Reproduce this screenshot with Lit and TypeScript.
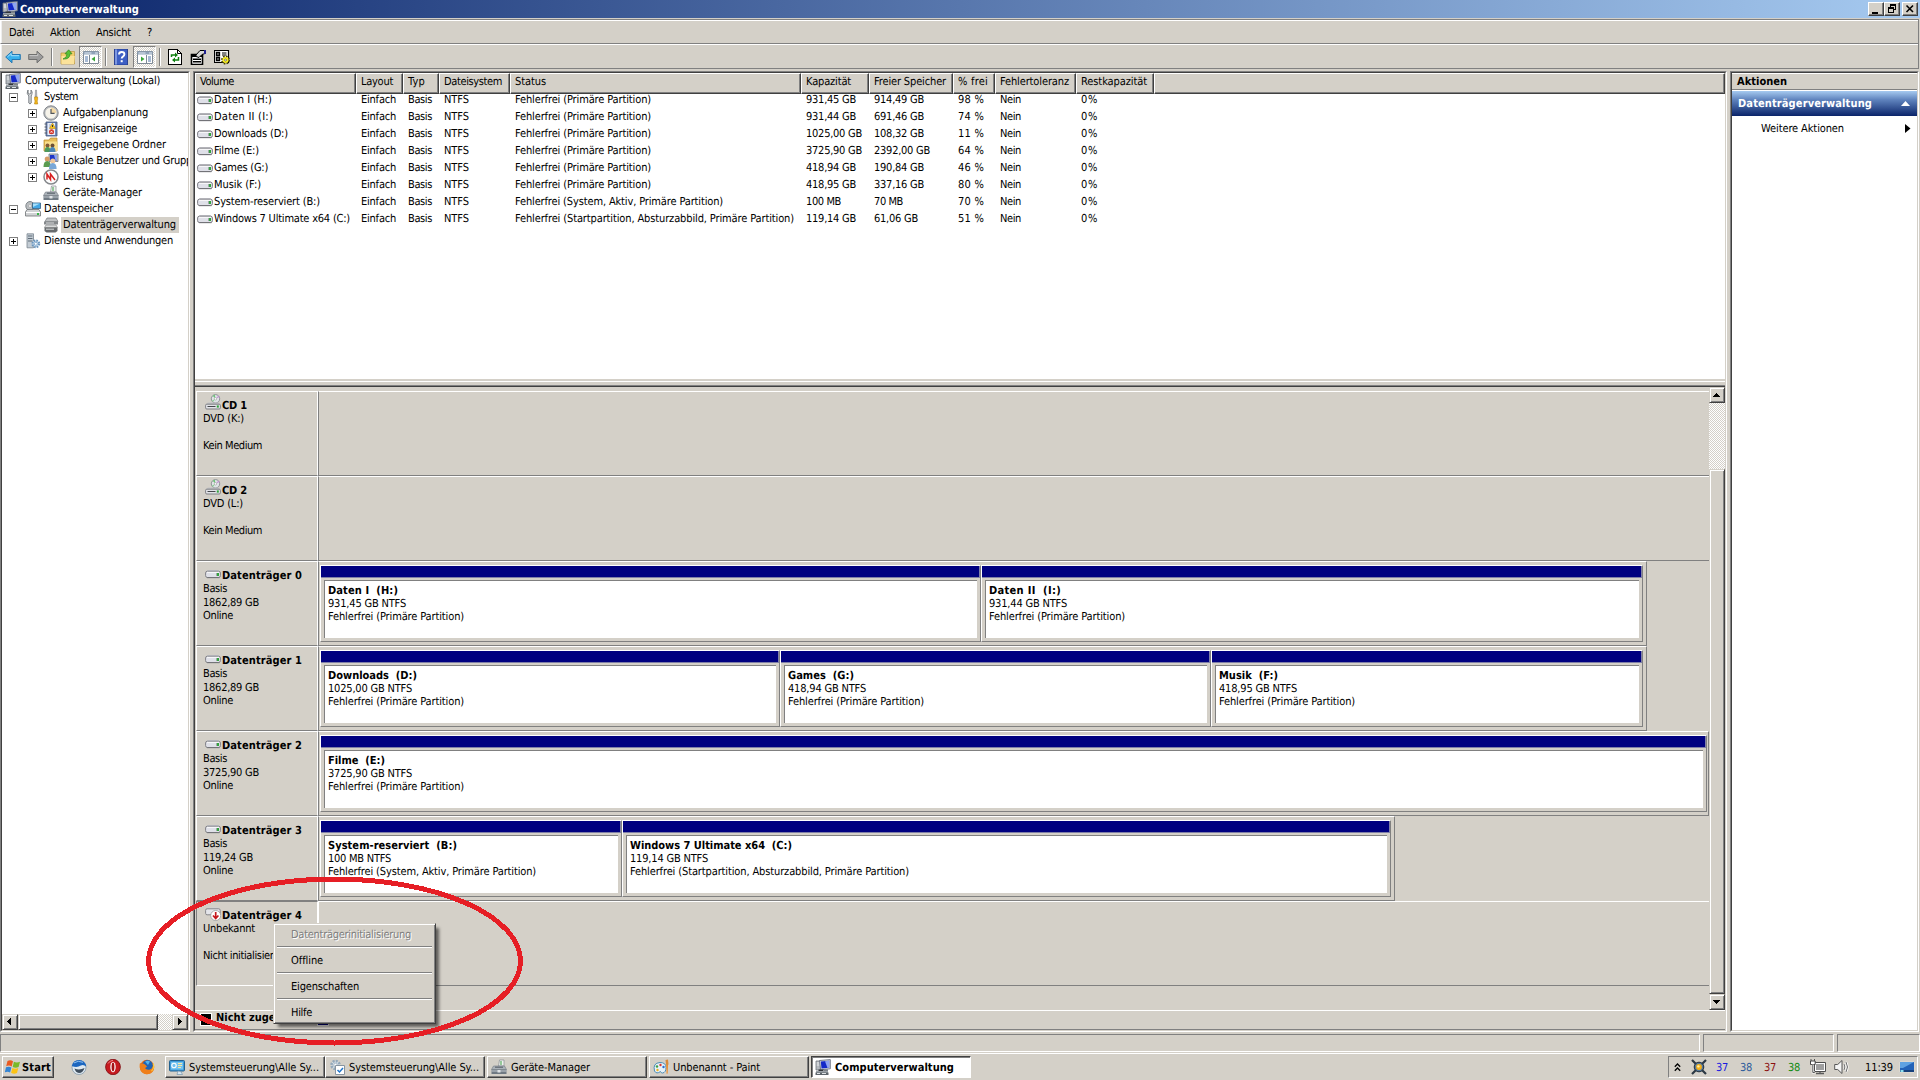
import { LitElement, html, css, svg, nothing } from "lit";
import { customElement, property } from "lit/decorators.js";

/* ---------- label metrics: classic 11px UI advances ---------- */
const REG: Record<string, string> = {
  "2": "il", "3": " j'", "4": ",.frt()-:\\I", "5": "csyzkJ?", "6": "vxabdeghnopquBCEFKPSTVXZ0123456789äöü",
  "7": "ADGHNRUY", "8": "OwmMQ", "11": "%", "10": "W",
};
const BOLD: Record<string, string> = {
  "3": "il ,.", "4": ":j-", "5": "trfsI()", "6": "cyz", "7": "vaäbdeghknopquxACFLSEBPT0123456789",
  "8": "DGNHVU", "9": "wMO", "10": "m", "11": "W",
};
const table = (src: Record<string, string>) => {
  const out: Record<string, number> = {};
  for (const k of Object.keys(src)) for (const c of src[k]) out[c] = Number(k);
  return out;
};
const REG_W = { ...table(REG), L: 5 };
const BOLD_W = { ...table(BOLD), s: 6 };
const FAMILY = '"DejaVu Sans Condensed", "DejaVu Sans", sans-serif';
const ctx = document.createElement("canvas").getContext("2d")!;

@customElement("ui-text")
class UiText extends LitElement {
  @property() t = "";
  @property({ type: Boolean, reflect: true }) bold = false;
  static styles = css`
    :host { display: inline-flex; white-space: pre; flex: none; height: 13px; font: 11px/13px "DejaVu Sans Condensed", "DejaVu Sans", sans-serif; vertical-align: top; }
    .t { display: block; text-rendering: geometricPrecision; }
    :host([bold]) .t { font-weight: bold; }
  `;
  render() {
    const w: Record<string, number> = this.bold ? BOLD_W : REG_W;
    let target = 0;
    for (const c of this.t) target += w[c] ?? 6;
    ctx.font = `${this.bold ? "bold " : ""}11px ${FAMILY}`;
    const gap = (target - ctx.measureText(this.t).width) / this.t.length;
    return html`<span class="t" style="letter-spacing:${gap.toFixed(3)}px">${this.t}</span>`;
  }
}
const T = (t: string, bold = false) => html`<ui-text .t=${t} ?bold=${bold}></ui-text>`;

/* ---------- icons, 16x16 ---------- */
const I: Record<string, unknown> = {
  computer: svg`<path d="M1 2h4.500v9H1z" fill="#b4b9bf" stroke="#6f757c" stroke-width=".8"/><path d="M1.800 4h3M1.800 6h3" stroke="#eef0f2"/><path d="M4.500 1.500L15.300.6v9.200L5.500 10.800z" fill="#d3d7dd" stroke="#6b7280" stroke-width=".9"/><path d="M5.800 2.500L14.200 1.800V8.700L6.500 9.500z" fill="#1428c8"/><path d="M10 2.200L14.200 1.800V8.700L12.500 8.900z" fill="#8fa4f0"/><path d="M9 10.300h4v1.700H9z" fill="#7d838a"/><path d="M3.500 10.500h5v1.500h-5z" fill="#30353a"/><path d="M1 12h12v2H1z" fill="#9aa1a8"/><path d="M.5 13.500h13V16H.5z" fill="#5d646b"/><path d="M2 14.500h3M7 14.500h4" stroke="#dfe3e6"/>`,
  tools: svg`<path d="M3 1v3l1.600 1L6 4V1q2 2 .8 4.500L6.200 7v7q-1.200 2-2.400 0V7Q1 4.500 3 1z" fill="#d5d8db" stroke="#73787d" stroke-width=".9"/><path d="M10.500 1h1l.4 7h-1.800z" fill="#b4b6b9" stroke="#7c7f83" stroke-width=".5"/><path d="M9.600 8h3v2.500l-.5 1.500.6 3h-3.200l.6-3-.5-1.500z" fill="#f3b81c" stroke="#b5800e" stroke-width=".6"/>`,
  clock: svg`<circle cx="8" cy="8" r="7.200" fill="#b7babd" stroke="#7c7f83" stroke-width=".9"/><circle cx="8" cy="8" r="5.600" fill="#f6f3ea"/><path d="M8 8V2.600A5.400 5.400 0 0 1 13.400 8z" fill="#f4d9a4"/><path d="M8 4v4.400h3.600" fill="none" stroke="#51565c" stroke-width="1.200"/>`,
  event: svg`<path d="M3 1h11v14H3z" fill="#7088b8" stroke="#42557c" stroke-width=".8"/><path d="M4.500 2h7.500v12H4.500z" fill="#e9eef8"/><path d="M6 4h5M6 6h5M6 12h5" stroke="#9aa9c6"/><path d="M1.500 3h2.500M1.500 6h2.500M1.500 9h2.500M1.500 12h2.500" stroke="#555d6a"/><path d="M9.500 2l3 5.500h-6z" fill="#fbc61d" stroke="#ad7c00" stroke-width=".5"/><path d="M9.500 4v2" stroke="#333"/><circle cx="8.500" cy="10.800" r="2.500" fill="#d33023"/><path d="M7.500 9.800l2 2m0-2l-2 2" stroke="#fff" stroke-width=".8"/>`,
  share: svg`<path d="M1 3h5l1.500-2H14v13H1z" fill="#e8bd58" stroke="#b78a2c" stroke-width=".7"/><path d="M2 4.500h12.500v9.500H2z" fill="#f9df8d"/><circle cx="4.500" cy="8.500" r="2" fill="#845b38"/><path d="M1.500 15q0-5 3-5t3 5z" fill="#4d9a5b"/><circle cx="9.500" cy="8.500" r="2" fill="#6d4f35"/><path d="M6.500 15q0-5 3-5t3 5z" fill="#4b85b8"/>`,
  users: svg`<path d="M6 1h9v7.500H6z" fill="#c5cad3" stroke="#6b7482" stroke-width=".8"/><path d="M7 2h7v5.500H7z" fill="#1d36c8"/><path d="M11 2h3v5.500h-1.500z" fill="#8fa4f0"/><circle cx="4.200" cy="6" r="2.500" fill="#d69c66"/><path d="M.5 14q0-6 3.700-6t3.700 6z" fill="#5a9b50"/><circle cx="9.800" cy="8" r="2.500" fill="#efc79b"/><path d="M6 16q0-6 3.800-6t3.800 6z" fill="#79a7d8"/>`,
  perf: svg`<circle cx="8" cy="8" r="7" fill="#fdfdfd" stroke="#85888c" stroke-width="1.500"/><path d="M4 10.500V5l3.500 5.500V5l4.500 6" fill="none" stroke="#d81f1f" stroke-width="1.500"/>`,
  device: svg`<path d="M8.500 1h4.500v6H7.500z" fill="#eef2ee" stroke="#8a8e92" stroke-width=".7"/><path d="M10 2v4" stroke="#3c9d46"/><path d="M2.500 7h11l2 3.500h-15z" fill="#aab1b8" stroke="#747b83" stroke-width=".6"/><path d="M4 8.200h8" stroke="#555c64"/><path d="M.5 10.500h15V15H.5z" fill="#6f7983"/><path d="M.5 12h15" stroke="#cdd3d8" stroke-width=".9"/><path d="M6.500 11h3v2.500h-3z" fill="#e1e4e7"/>`,
  storage: svg`<ellipse cx="5" cy="5" rx="4.200" ry="4.500" fill="#b9bdc0" stroke="#6c7378" stroke-width=".8"/><circle cx="5" cy="5" r="1.400" fill="#fff" stroke="#888" stroke-width=".5"/><path d="M7.500 2h8v5.500h-8z" fill="#44a8e6" stroke="#345e80" stroke-width=".8"/><path d="M8 2.500h7L8 6z" fill="#a7e0fb"/><path d="M2 8.500h12l1.500 2.500v4H.5v-4z" fill="#d0d2d4" stroke="#6e7275" stroke-width=".8"/><path d="M1 11.500h14" stroke="#fff"/><path d="M12 12h2v2h-2z" fill="#39b54a"/>`,
  diskmgmt: svg`<path d="M4 1h9l2 3.500H2z" fill="#bfc2c4" stroke="#777a7c" stroke-width=".7"/><path d="M1 4.500h14v3H1z" fill="#85898c"/><path d="M3 8h10l1.500 2.500h-13z" fill="#d9dbdc" stroke="#77797a" stroke-width=".6"/><path d="M1.500 10.500h13V14l-2 1.500h-9L1.500 14z" fill="#686c6f"/><path d="M3 12.200h8M3 6h8" stroke="#e1e3e4" stroke-width=".9"/>`,
  services: svg`<path d="M2 .8h6.500v14H2z" fill="#c3ccd4" stroke="#7a858f" stroke-width=".8"/><path d="M3 3h4.500M3 5.500h4.500M3 8h4.500" stroke="#5f6c78"/><circle cx="10.800" cy="10.800" r="3.300" fill="#cfe2f3" stroke="#6c96bd" stroke-width="2.200" stroke-dasharray="1.600 1"/><circle cx="10.800" cy="10.800" r="1.500" fill="#fff" stroke="#6c96bd" stroke-width=".7"/>`,
  drive: svg`<path d="M3 4h10l2.200 1.600H.8z" fill="#c8c9ce"/><rect x=".6" y="5.200" width="14.800" height="6.300" rx="1.800" fill="#dfe0e8" stroke="#818187" stroke-width="1"/><path d="M2 6.400h12" stroke="#fff" stroke-width=".8"/><path d="M2 11.700h12.500" stroke="#6b6b70" stroke-width=".8"/><path d="M12 7h2v3h-2z" fill="#2fa43a"/><path d="M11.400 7h.7v3h-.7z" fill="#76877a"/>`,
  cd: svg`<circle cx="10.500" cy="4.800" r="4.200" fill="#e0e4e7" stroke="#85898d" stroke-width=".9"/><path d="M10.500 4.800L7.600 1.800l2.200-1z" fill="#6cc277"/><path d="M10.500 4.800l3-3.200 1 1.500z" fill="#c08fd0"/><path d="M10.500 4.800L8 8l-1-1.500z" fill="#8fcf98"/><circle cx="10.500" cy="4.800" r="1.200" fill="#fff" stroke="#888" stroke-width=".5"/><path d="M3 8.500h10l2.500 2H.8z" fill="#bfc1c6"/><rect x=".6" y="10.200" width="14.800" height="4.800" rx="1.200" fill="#e2e3e8" stroke="#7e7e83"/><path d="M2.500 12.500h8" stroke="#45474a"/><path d="M11.800 11.400h2v2.200h-2z" fill="#2fa43a"/>`,
  baddrive: svg`<path d="M3 1.500h10L15 3H1z" fill="#cfd0d5"/><rect x=".6" y="2.800" width="14.600" height="6" rx="1.500" fill="#e4e5ea" stroke="#86868b"/><circle cx="10.700" cy="9.500" r="5" fill="#fff" stroke="#9a9a9e" stroke-width=".8"/><path d="M10.700 6v6M8 9.500l2.700 3 2.700-3" fill="none" stroke="#c4161c" stroke-width="1.700"/>`,
  back: svg`<path d="M.7 8L7 2.200v3.300h8.300v5H7v3.300z" fill="#39b1ec" stroke="#1b6fae" stroke-width=".9"/><path d="M2.500 7.800L6.200 4.500v2.200H14" fill="none" stroke="#a5e0fb"/>`,
  fwd: svg`<path d="M15.300 8L9 2.200v3.300H.7v5H9v3.300z" fill="#9c9c9c" stroke="#686868" stroke-width=".9"/><path d="M1.500 6.600h8.300V4.500" fill="none" stroke="#c8c8c8"/>`,
  folderup: svg`<path d="M1 4h5l1-1.500h7.500V15H1z" fill="#f2cf6d" stroke="#b9933b" stroke-width=".7"/><path d="M1.500 7h13.300L14 15H1.500z" fill="#fbe29a"/><path d="M3 10q4-1 4-5.200H5L8.700.8l3.300 4h-2Q10 10.500 3 10z" fill="#58c137" stroke="#2d8620" stroke-width=".7"/>`,
  paneL: svg`<path d="M.5 2.500h15v12H.5z" fill="#fff" stroke="#7f8a96"/><path d="M.5 2.500h15v3H.5z" fill="#8fa2b8"/><path d="M12 4h3M1.500 4h7" stroke="#e8eef5" stroke-width=".9"/><path d="M6.500 6v8.500" stroke="#7f8a96"/><path d="M2 8h3M2 10h3M2 12h3" stroke="#4f75a8"/><path d="M12 7.500v5L8.500 10z" fill="#3aa63a"/>`,
  paneR: svg`<path d="M.5 2.500h15v12H.5z" fill="#fff" stroke="#7f8a96"/><path d="M.5 2.500h15v3H.5z" fill="#8fa2b8"/><path d="M12 4h3M1.500 4h7" stroke="#e8eef5" stroke-width=".9"/><path d="M9.500 6v8.500" stroke="#7f8a96"/><path d="M11 8h3M11 10h3M11 12h3" stroke="#4f75a8"/><path d="M4 7.500v5L7.500 10z" fill="#3aa63a"/>`,
  help: svg`<path d="M1.500 0h13v16h-13z" fill="#3d5fc4" stroke="#223a8c" stroke-width=".9"/><path d="M2 .5h2v15H2z" fill="#7d97e0"/><path d="M6 5.500q0-2.500 2.700-2.500t2.700 2.300q0 1.500-1.500 2.300-1.200.7-1.200 2" fill="none" stroke="#fff" stroke-width="1.900"/><path d="M7.700 11.200h2v2h-2z" fill="#fff"/>`,
  refresh: svg`<path d="M1.500.5h9l4 4v11h-13z" fill="#fff" stroke="#000" shape-rendering="crispEdges"/><path d="M10.500.5v4h4" fill="none" stroke="#000"/><path d="M4.500 8V6h4M11.500 8v3h-4" fill="none" stroke="#108010" stroke-width="1.500"/><path d="M8 3.500v5L11 6zM8 8.500v5L5 11z" fill="#108010"/>`,
  props: svg`<path d="M1.500 5.500h11v10h-11z" fill="#fff" stroke="#000" stroke-width="1.600"/><path d="M1 5h12v3H1z"/><path d="M3 10.200h8M3 12.700h8" stroke="#000" stroke-width="1.500"/><path d="M6 6l4-4.500h5v3l-3 1-3 3-3-1z" fill="#d8d8d8" stroke="#000"/><path d="M14 1h2v4h-2z" fill="#202090"/>`,
  snap: svg`<path d="M.5 1.500h14v12H.5z" fill="#fff" stroke="#000" stroke-width="1.200"/><path d="M2.500 3.500h3v3h-3zM2.500 8.500h3v3h-3z" fill="#888" stroke="#000" stroke-width="1.300"/><path d="M8 4h4.500M8 6h4.500" stroke="#000"/><circle cx="11.500" cy="11" r="3.200" fill="none" stroke="#4b4500" stroke-width="2.600" stroke-dasharray="1.500 1"/><circle cx="11.500" cy="11" r="3" fill="#f8ee20"/><circle cx="11.500" cy="11" r="1" fill="#fff" stroke="#555" stroke-width=".7"/>`,
  flag: svg`<path d="M2.500 2q3-1.500 5.500.3L6.700 7.500q-2.500-1.600-5.500-.3z" fill="#ea5a20"/><path d="M8.900 2.700q2.800 1.500 6.100 0L13.600 8q-3 1.300-5.900-.1z" fill="#7ab929"/><path d="M1 8.300q3-1.400 5.400.2L5.100 13.600q-2.500-1.500-5.300-.2z" fill="#3384d3"/><path d="M7.400 9q2.900 1.500 5.900.1L12 14q-3 1.500-5.900-.2z" fill="#fcc315"/>`,
  bird: svg`<circle cx="8" cy="8.500" r="7" fill="#dfe9f1" stroke="#8398aa" stroke-width=".8"/><path d="M.8 7Q2 1 8 1q6.200 0 7.300 6.500-3-2.500-5.500-1Q6 9 .8 7z" fill="#1c66bf"/><path d="M3.500 9.500q5 2 10-.5-1.500 5-5.500 5-3.500-.5-4.500-4.500z" fill="#3f4e5e"/><path d="M3 3.900Q7 1 12 3.300" stroke="#8cc0f2" fill="none"/>`,
  opera: svg`<ellipse cx="8" cy="8" rx="7.400" ry="7.700" fill="#c61a20" stroke="#7c0b10" stroke-width=".8"/><ellipse cx="8" cy="8" rx="2.700" ry="5.200" fill="#fff"/><ellipse cx="8" cy="8" rx="1.400" ry="4.400" fill="#a51015"/><path d="M3 4.500Q5 1.500 8 1.300" stroke="#f08c8c" fill="none"/>`,
  firefox: svg`<circle cx="8" cy="8" r="7.200" fill="#e66a12"/><circle cx="8.500" cy="6.400" r="5.300" fill="#1f63b5"/><path d="M6 2.500q3-1.500 5 0L9 6z" fill="#56b3ea"/><path d="M1 4q1.500 1 3.500.6Q7 6 8 7.500 7 8.500 6 9q1.500 2.500 5 1.500 3.500-1.500 3.200-6Q17 11 11.500 14.500 5 17 1.700 11.500 0 8 1 4z" fill="#ef7f1a"/><path d="M14.200 4.500q1.500 4.500-1.700 7.600" stroke="#fbc63a" stroke-width="1.200" fill="none"/>`,
  control: svg`<rect x=".5" y="1.500" width="15" height="10.500" rx="1" fill="#3f9bd9" stroke="#22618f"/><path d="M2 3h12v7.500H2z" fill="#74c3ef"/><circle cx="5" cy="6.500" r="2.200" fill="none" stroke="#fff" stroke-width="1.100"/><path d="M9 4.500h4M9 6.500h4M9 8.500h3" stroke="#fbe8a0"/><path d="M9 12q4 0 4.500 3.500H8z" fill="#d8e7f2" stroke="#7795ab" stroke-width=".7"/>`,
  gearcheck: svg`<circle cx="6.500" cy="6" r="4" fill="#d3dde6" stroke="#93a8ba" stroke-width="2.600" stroke-dasharray="2 1.100"/><circle cx="6.500" cy="6" r="1.700" fill="#fff" stroke="#8fa4b5" stroke-width=".7"/><path d="M6.500 6.500h9v9h-9z" fill="#fff" stroke="#8794a0"/><path d="M8.500 11l2 2 3.500-4" fill="none" stroke="#1f74c9" stroke-width="1.500"/>`,
  paint: svg`<path d="M7 3.500q6 0 6 5t-3.500 5.500q-1.500 0-2-1.500-4 3-6-.5Q-.5 4 7 3.500z" fill="#e7f1f7" stroke="#4d8db4" stroke-width="1"/><circle cx="4" cy="7.500" r="1.200" fill="#3a9e45"/><circle cx="7.500" cy="6" r="1.200" fill="#d73c34"/><circle cx="10.500" cy="8" r="1.200" fill="#2c6fd0"/><circle cx="4.500" cy="11" r="1.200" fill="#f0b21e"/><path d="M12.500 1l2.500-.5.5 5-1.500 1-1-1z" fill="#d98a3a"/><path d="M13.200 6h1.800l-.4 8.500-.9.500z" fill="#ee8a24"/>`,
  lens: svg`<path d="M1 1l14 14M15 1L1 15" stroke="#2c3844" stroke-width="2.200"/><circle cx="8" cy="8" r="4.800" fill="#56789a" stroke="#1e2b38"/><circle cx="8" cy="8" r="2.900" fill="#f6b018"/><circle cx="7.400" cy="7.400" r="1.200" fill="#fff0a0"/>`,
  net: svg`<path d="M4.500 3.500h11v9h-11z" fill="#fff" stroke="#4e4e4e"/><path d="M6 5h8v6H6z" fill="#9f9f9f"/><path d="M6 14.500h8M10 12.500v2" stroke="#5a5a5a" stroke-width="1.300"/><path d="M1 0v2M4.500 0v2" stroke="#555"/><path d="M.5 2h4.700v3.500H.5z" fill="#fff" stroke="#444"/><path d="M2.800 5.500v8h2" fill="none" stroke="#fff" stroke-width="2"/><path d="M2.800 5.500v8h2" fill="none" stroke="#555"/>`,
  sound: svg`<path d="M.7 5.500h3L8 1.500v13L3.700 10.500h-3z" fill="#f5f5f5" stroke="#585858"/><path d="M10 5q1.700 3 0 6M12 3q3 5 0 10" fill="none" stroke="#fff" stroke-width="2.200"/><path d="M10 5q1.700 3 0 6M12 3q3 5 0 10" fill="none" stroke="#6a6a6a" stroke-width="1"/>`,
  desk: svg`<path d="M.5 2.500h15v11H.5z" fill="#2363b8" stroke="#dcd8d0"/><path d="M1 3h14L4 9H1z" fill="#5fa2e2"/><path d="M1 11h14v2H1z" fill="#16407c"/><path d="M1.500 11h3v2h-3z" fill="#8be0f0"/>`,
};
const icon = (n: string) => html`<svg class="ic" viewBox="0 0 16 16" width="16" height="16">${I[n]}</svg>`;
const arrow = (d: string, fill = "#000") =>
  html`<svg width="8" height="8" viewBox="0 0 8 8" shape-rendering="crispEdges"><path d=${d} fill=${fill} /></svg>`;
const A = { up: "M3 2h1v1h1v1h1v1h1v1H0V5h1V4h1V3h1z", down: "M0 2h7v1H6v1H5v1H4v1H3V5H2V4H1V3H0z", left: "M5 0v7H4V6H3V5H2V4H1V3h1V2h1V1h1V0z", right: "M2 0h1v1h1v1h1v1h1v1H5v1H4v1H3v1H2z" };

/* ---------- data ---------- */
const tree: [number, string, string, string][] = [
  [0, "", "computer", "Computerverwaltung (Lokal)"],
  [1, "-", "tools", "System"],
  [2, "+", "clock", "Aufgabenplanung"],
  [2, "+", "event", "Ereignisanzeige"],
  [2, "+", "share", "Freigegebene Ordner"],
  [2, "+", "users", "Lokale Benutzer und Gruppen"],
  [2, "+", "perf", "Leistung"],
  [2, "", "device", "Geräte-Manager"],
  [1, "-", "storage", "Datenspeicher"],
  [2, "", "diskmgmt", "Datenträgerverwaltung"],
  [1, "+", "services", "Dienste und Anwendungen"],
];
const cols = ["Volume", "Layout", "Typ", "Dateisystem", "Status", "Kapazität", "Freier Speicher", "% frei", "Fehlertoleranz", "Restkapazität"];
const P = "Fehlerfrei (Primäre Partition)";
const PS = "Fehlerfrei (System, Aktiv, Primäre Partition)";
const PW = "Fehlerfrei (Startpartition, Absturzabbild, Primäre Partition)";
const vols = [
  ["Daten I (H:)", P, "931,45 GB", "914,49 GB", "98 %"],
  ["Daten II (I:)", P, "931,44 GB", "691,46 GB", "74 %"],
  ["Downloads (D:)", P, "1025,00 GB", "108,32 GB", "11 %"],
  ["Filme (E:)", P, "3725,90 GB", "2392,00 GB", "64 %"],
  ["Games (G:)", P, "418,94 GB", "190,84 GB", "46 %"],
  ["Musik (F:)", P, "418,95 GB", "337,16 GB", "80 %"],
  ["System-reserviert (B:)", PS, "100 MB", "70 MB", "70 %"],
  ["Windows 7 Ultimate x64 (C:)", PW, "119,14 GB", "61,06 GB", "51 %"],
];
type Vol = [number, string, string, string];
type Disk = { kind: string; icon: string; name: string; lines: string[]; w?: number; vols?: Vol[] };
const disks: Disk[] = [
  { kind: "cd", icon: "cd", name: "CD 1", lines: ["DVD (K:)", "", "Kein Medium"] },
  { kind: "cd", icon: "cd", name: "CD 2", lines: ["DVD (L:)", "", "Kein Medium"] },
  { kind: "hd", icon: "drive", name: "Datenträger 0", lines: ["Basis", "1862,89 GB", "Online"], w: 1329,
    vols: [[661, "Daten I  (H:)", "931,45 GB NTFS", P], [662, "Daten II  (I:)", "931,44 GB NTFS", P]] },
  { kind: "hd", icon: "drive", name: "Datenträger 1", lines: ["Basis", "1862,89 GB", "Online"], w: 1329,
    vols: [[460, "Downloads  (D:)", "1025,00 GB NTFS", P], [431, "Games  (G:)", "418,94 GB NTFS", P], [432, "Musik  (F:)", "418,95 GB NTFS", P]] },
  { kind: "hd", icon: "drive", name: "Datenträger 2", lines: ["Basis", "3725,90 GB", "Online"], w: 1391,
    vols: [[1387, "Filme  (E:)", "3725,90 GB NTFS", P]] },
  { kind: "hd", icon: "drive", name: "Datenträger 3", lines: ["Basis", "119,24 GB", "Online"], w: 1077,
    vols: [[302, "System-reserviert  (B:)", "100 MB NTFS", PS], [769, "Windows 7 Ultimate x64  (C:)", "119,14 GB NTFS", PW]] },
  { kind: "sel", icon: "baddrive", name: "Datenträger 4", lines: ["Unbekannt", "", "Nicht initialisiert"] },
];

@customElement("app-root")
class AppRoot extends LitElement {
  static styles = css`
    :host { display: block; }
    * { box-sizing: border-box; }
    svg { display: block; flex: none; }
    .screen { position: relative; width: 1920px; height: 1080px; overflow: hidden; background: #d4d0c8; color: #000; display: flex; flex-direction: column; }
    .title { height: 18px; background: linear-gradient(90deg, #0a246a, #a6caf0); display: flex; align-items: center; color: #fff; padding: 0 2px; }
    .title .ic { margin-right: 2px; }
    .grow { flex: 1; }
    .wb { width: 16px; height: 14px; margin-top: -1px; background: #d4d0c8; border: 1px solid; border-color: #fff #404040 #404040 #fff; box-shadow: inset -1px -1px #808080; }
    .wb.last { margin-left: 2px; }
    .bars { margin-top: 1px; width: 1919px; height: 50px; flex: none; border: 1px solid #808080; border-width: 1px 1px 1px 0; }
    .menubar, .toolbar { display: flex; align-items: center; border-top: 1px solid #fff; border-left: 1px solid #fff; box-shadow: inset 1px 0 #eee; }
    .menubar { height: 24px; padding-left: 8px; border-bottom: 1px solid #808080; gap: 16px; }
    .toolbar { height: 24px; padding-left: 4px; }
    .tsep { width: 2px; height: 18px; background: #808080; border-right: 1px solid #fff; }
    .dither { background: conic-gradient(#fff 25%, #d4d0c8 0 50%, #fff 0 75%, #d4d0c8 0) 0 0 / 2px 2px; }
    .tg { width: 23px; height: 22px; display: flex; align-items: center; justify-content: center; border: 1px solid; border-color: #808080 #fff #fff #808080; }
    .main { height: 964px; flex: none; padding-top: 2px; display: flex; gap: 3px; }
    .sunk { border: 1px solid; border-color: #808080 #fff #fff #808080; height: 961px; flex: none; display: flex; }
    .in { flex: 1; min-width: 0; border: 1px solid; border-color: #404040 #d4d0c8 #d4d0c8 #404040; display: flex; flex-direction: column; overflow: hidden; background: #fff; }
    .in > * { flex-shrink: 0; }
    .left { width: 190px; }
    .center { width: 1534px; }
    .right { width: 189px; }
    .tree { flex: 1; overflow: hidden; }
    .node { display: flex; align-items: center; height: 16px; white-space: nowrap; }
    .l0 { padding-left: 3px; } .l1 { padding-left: 7px; } .l2 { padding-left: 26px; }
    .tog { width: 9px; height: 9px; border: 1px solid #808080; margin-right: 7px; flex: none; }
    .tog.none { border-color: transparent; }
    .tog svg { width: 7px; height: 7px; }
    .l2 .tog { margin-right: 6px; }
    .node .lbl { padding: 1px 3px 2px 2px; margin-left: 1px; height: 16px; display: flex; flex: none; }
    .l2 .lbl, .l0 .lbl { margin-left: 2px; }
    .lbl.on { background: #d4d0c8; }
    .raised { background: #d4d0c8; border: 1px solid; border-color: #d4d0c8 #404040 #404040 #d4d0c8; box-shadow: inset 1px 1px #fff, inset -1px -1px #808080; display: flex; align-items: center; justify-content: center; flex: none; }
    .hscroll { display: flex; height: 16px; }
    .sb { width: 16px; height: 16px; }
    .hthumb { width: 140px; }
    .cols { display: grid; grid-template-columns: 161px 47px 36px 71px 291px 68px 84px 42px 81px 78px 1fr; }
    .head { height: 17px; }
    .hc { background: #d4d0c8; border: 1px solid; border-color: #fff #404040 #404040 #fff; box-shadow: inset -1px -1px #808080; padding: 1px 0 0 4px; white-space: nowrap; }
    .rows { height: 289px; padding-top: 1px; }
    .row { height: 17px; align-items: center; }
    .c { padding-left: 5px; display: flex; align-items: center; white-space: nowrap; }
    .c.first { padding-left: 2px; gap: 1px; }
    .split { height: 8px; background: #d4d0c8; padding-top: 2px; display: flex; flex-direction: column; border-bottom: 1px solid #404040; }
    .split i { flex: 1; border-top: 1px solid #fff; border-bottom: 1px solid #808080; }
    .map { height: 623px; display: flex; background: #d4d0c8; }
    .disks { flex: 1; padding: 4px 0 0 1px; overflow: hidden; }
    .disk { height: 85px; display: flex; }
    .dl { width: 122px; flex: none; border: 1px solid; border-color: #fff #fff #808080 #fff; padding: 6px 0 0 6px; white-space: nowrap; }
    .dl .nm { display: flex; height: 14px; align-items: center; padding-left: 2px; }
    .dl .nm ui-text { margin-left: 1px; }
    .nm .ic { margin-top: -2px; }
    .cd .nm .ic { margin-top: -6px; }
    .ln { height: 13.4px; display: flex; align-items: center; }
    .db { border: 1px solid; border-color: #fff #808080 #808080 #808080; display: flex; padding: 3px 0 0 1px; flex: none; }
    .cd .db, .sel .db { flex: 1; border-right: 0; }
    .sel .dl { border-color: #808080 #fff #fff #808080; overflow: hidden; }
    .sel .db { border-left-color: #fff; }
    .vol { height: 77px; border: 1px solid; border-color: #fff #808080 #808080 #fff; padding-right: 3px; flex: none; white-space: nowrap; }
    .bar { height: 12px; background: #000080; border-bottom: 1px solid #8080a8; border-right: 1px solid #8080a8; margin-right: -3px; }
    .box { height: 58px; margin: 2px 0 0 3px; background: #fff; border: 1px solid #808080; border-width: 1px 0 0 1px; padding: 3px 0 0 3px; }
    .box div { height: 13px; display: flex; align-items: center; }
    .vscroll { width: 16px; display: flex; flex-direction: column; }
    .vscroll .gap { height: 66px; }
    .vthumb { flex: 1; }
    .legend { height: 20px; background: #d4d0c8; border-top: 1px solid #fff; border-bottom: 1px solid #808080; display: flex; align-items: center; padding: 0 0 1px 5px; }
    .sw { width: 12px; height: 13px; background: #000; border: 1px solid #fff; margin-right: 4px; }
    .sw.blue { background: #000080; margin-left: 2px; }
    .lt { width: 99px; }
    .ah { height: 17px; background: #d4d0c8; border-top: 1px solid #fff; border-bottom: 1px solid #808080; padding: 1px 0 0 5px; }
    .ab { height: 25px; margin-top: 1px; background: linear-gradient(#a6caf0, #5f83bd 35%, #0a246a); color: #fff; display: flex; align-items: center; justify-content: space-between; padding: 0 7px 0 6px; }
    .aw { height: 24px; display: flex; align-items: center; justify-content: space-between; padding: 0 6px 0 29px; }
    .status { height: 19px; display: flex; gap: 3px; padding-top: 1px; margin-bottom: 1px; }
    .st { border: 1px solid; border-color: #808080 #fff #fff #808080; height: 18px; }
    .st.a { width: 1700px; } .st.b { width: 131px; } .st.c3 { width: 83px; }
    .task { border-top: 1px solid #fff; height: 27px; display: flex; padding: 2px 2px 0; }
    .tb { height: 22px; background: #d4d0c8; border: 1px solid; border-color: #fff #404040 #404040 #fff; box-shadow: inset -1px -1px #808080; display: flex; align-items: center; white-space: nowrap; flex: none; }
    .start { width: 52px; padding-left: 2px; } .start ui-text { margin-left: 1px; }
    .ql { display: flex; gap: 18px; padding-left: 17px; align-items: center; width: 111px; height: 22px; }
    .app { width: 160px; padding-left: 3px; gap: 4px; margin-right: 2px; }
    .app.tight { margin-right: 0; }
    .app.on { background: #fff; border-color: #404040 #fff #fff #404040; box-shadow: inset 1px 1px #808080; }
    .tray { width: 250px; height: 22px; border: 1px solid; border-color: #808080 #fff #fff #808080; display: flex; align-items: center; padding-left: 5px; flex: none; }
    .tray span { height: 13px; }
    .n1 { color: #1a1ae0; margin-left: 9px; } .n2 { color: #2a5a9a; margin-left: 12px; } .n3 { color: #8c1010; margin-left: 12px; } .n4 { color: #108a10; margin-left: 12px; }
    .popup { position: absolute; left: 273px; top: 923px; width: 163px; height: 101px; background: #d4d0c8; border: 1px solid; border-color: #d4d0c8 #404040 #404040 #d4d0c8; box-shadow: inset 1px 1px #fff, inset -1px -1px #808080, 4px 4px 3px -1px rgba(0, 0, 0, .55); padding: 1px 2px; }
    .mi { height: 19px; display: flex; align-items: center; padding-left: 15px; }
    .mi.off { color: #808080; text-shadow: 1px 1px #fff; }
    .ms { height: 2px; background: #808080; border-bottom: 1px solid #fff; margin: 2px 1px 3px; }
    .mark { position: absolute; left: 140px; top: 870px; }
  `;

  private disk(d: Disk) {
    return html`<div class="disk ${d.kind}">
      <div class="dl">
        <div class="nm">${icon(d.icon)}${T(d.name, true)}</div>
        ${d.lines.map((l) => html`<div class="ln">${l ? T(l) : nothing}</div>`)}
      </div>
      <div class="db" style=${d.w ? `width:${d.w}px` : ""}>
        ${d.vols?.map((v) => html`<div class="vol" style="width:${v[0]}px">
          <div class="bar"></div>
          <div class="box"><div>${T(v[1], true)}</div><div>${T(v[2])}</div><div>${T(v[3])}</div></div>
        </div>`)}
      </div>
    </div>`;
  }

  render() {
    return html`<div class="screen">
      <div class="title">${icon("computer")}${T("Computerverwaltung", true)}<span class="grow"></span>
        <svg class="wb" viewBox="0 0 14 12" shape-rendering="crispEdges"><path d="M3 9h6v2H3z" /></svg>
        <svg class="wb" viewBox="0 0 14 12" shape-rendering="crispEdges"><path d="M5 1h6v6H9V6h1V3H6v1H5zM3 4h6v6H3zM4 6v3h4V6z" fill-rule="evenodd" /></svg>
        <svg class="wb last" viewBox="0 0 14 12"><path d="M3.500 2.500l6.500 6.500M10 2.500L3.500 9" stroke="#000" stroke-width="1.600" /></svg>
      </div>
      <div class="bars">
        <div class="menubar">${T("Datei")}${T("Aktion")}${T("Ansicht")}${T("?")}</div>
        <div class="toolbar">
          ${icon("back")}<span style="width:7px"></span>${icon("fwd")}<span style="width:7px"></span><i class="tsep"></i><span style="width:7px"></span>
          ${icon("folderup")}<span style="width:3px"></span><span class="tg dither">${icon("paneL")}</span><span style="width:3px"></span><i class="tsep"></i><span style="width:6px"></span>
          ${icon("help")}<span style="width:4px"></span><span class="tg dither">${icon("paneR")}</span><span style="width:3px"></span><i class="tsep"></i><span style="width:6px"></span>
          ${icon("refresh")}<span style="width:7px"></span>${icon("props")}<span style="width:8px"></span>${icon("snap")}
        </div>
      </div>
      <div class="main">
        <div class="sunk left"><div class="in">
          <div class="tree">
            ${tree.map(([l, tg, ic, tx], i) => html`<div class="node l${l}">
              ${l ? html`<span class="tog ${tg ? "" : "none"}">${tg
                ? html`<svg viewBox="0 0 7 7" shape-rendering="crispEdges"><path d=${tg === "+" ? "M1 3h5v1H1zM3 1h1v5H3z" : "M1 3h5v1H1z"} /></svg>` : nothing}</span>` : nothing}
              ${icon(ic)}<span class="lbl ${i === 9 ? "on" : ""}">${T(tx)}</span></div>`)}
          </div>
          <div class="hscroll dither"><div class="raised sb">${arrow(A.left)}</div><div class="raised hthumb"></div><span class="grow"></span><div class="raised sb">${arrow(A.right)}</div></div>
        </div></div>
        <div class="sunk center"><div class="in">
          <div class="cols head">${cols.map((c) => html`<div class="hc">${T(c)}</div>`)}<div class="hc"></div></div>
          <div class="rows">
            ${vols.map((v) => html`<div class="cols row">
              <div class="c first">${icon("drive")}${T(v[0])}</div>
              ${["Einfach", "Basis", "NTFS", v[1], v[2], v[3], v[4], "Nein", "0%"].map((x) => html`<div class="c">${T(x)}</div>`)}
            </div>`)}
          </div>
          <div class="split"><i></i></div>
          <div class="map">
            <div class="disks">${disks.map((d) => this.disk(d))}</div>
            <div class="vscroll dither"><div class="raised sb">${arrow(A.up)}</div><div class="gap"></div><div class="raised vthumb"></div><div class="raised sb">${arrow(A.down)}</div></div>
          </div>
          <div class="legend"><i class="sw"></i><span class="lt">${T("Nicht zugeordnet", true)}</span><i class="sw blue"></i></div>
        </div></div>
        <div class="sunk right"><div class="in">
          <div class="ah">${T("Aktionen", true)}</div>
          <div class="ab">${T("Datenträgerverwaltung", true)}<svg width="9" height="5" viewBox="0 0 9 5"><path d="M0 5L4.500 0 9 5z" fill="#fff" /></svg></div>
          <div class="aw">${T("Weitere Aktionen")}<svg width="6" height="9" viewBox="0 0 6 9"><path d="M0 0l5.500 4.500L0 9z" /></svg></div>
        </div></div>
      </div>
      <div class="status"><div class="st a"></div><div class="st b"></div><div class="st c3"></div></div>
      <div class="task">
        <div class="tb start">${icon("flag")}${T("Start", true)}</div>
        <div class="ql">${icon("bird")}${icon("opera")}${icon("firefox")}</div>
        <div class="tb app tight">${icon("control")}${T("Systemsteuerung\\Alle Sy...")}</div>
        <div class="tb app">${icon("gearcheck")}${T("Systemsteuerung\\Alle Sy...")}</div>
        <div class="tb app">${icon("device")}${T("Geräte-Manager")}</div>
        <div class="tb app">${icon("paint")}${T("Unbenannt - Paint")}</div>
        <div class="tb app on">${icon("computer")}${T("Computerverwaltung", true)}</div>
        <span class="grow"></span>
        <div class="tray">
          <svg width="7" height="9" viewBox="0 0 7 9"><path d="M.8 3.800L3.500 1l2.700 2.800M.8 7.800L3.500 5l2.700 2.800" fill="none" stroke="#000" stroke-width="1.300" /></svg><span style="width:10px"></span>
          ${icon("lens")}<span class="n1">${T("37")}</span><span class="n2">${T("38")}</span><span class="n3">${T("37")}</span><span class="n4">${T("38")}</span>
          <span style="width:10px"></span>${icon("net")}<span style="width:8px"></span>${icon("sound")}<span style="width:15px"></span>${T("11:39")}<span style="width:6px"></span>${icon("desk")}
        </div>
      </div>
      <div class="popup">
        <div class="mi off">${T("Datenträgerinitialisierung")}</div><div class="ms"></div>
        <div class="mi">${T("Offline")}</div><div class="ms"></div>
        <div class="mi">${T("Eigenschaften")}</div><div class="ms"></div>
        <div class="mi">${T("Hilfe")}</div>
      </div>
      <svg class="mark" width="390" height="180" viewBox="140 870 390 180" shape-rendering="crispEdges"><ellipse cx="334.500" cy="961" rx="186" ry="82" fill="none" stroke="#e61e25" stroke-width="5" /></svg>
    </div>`;
  }
}
